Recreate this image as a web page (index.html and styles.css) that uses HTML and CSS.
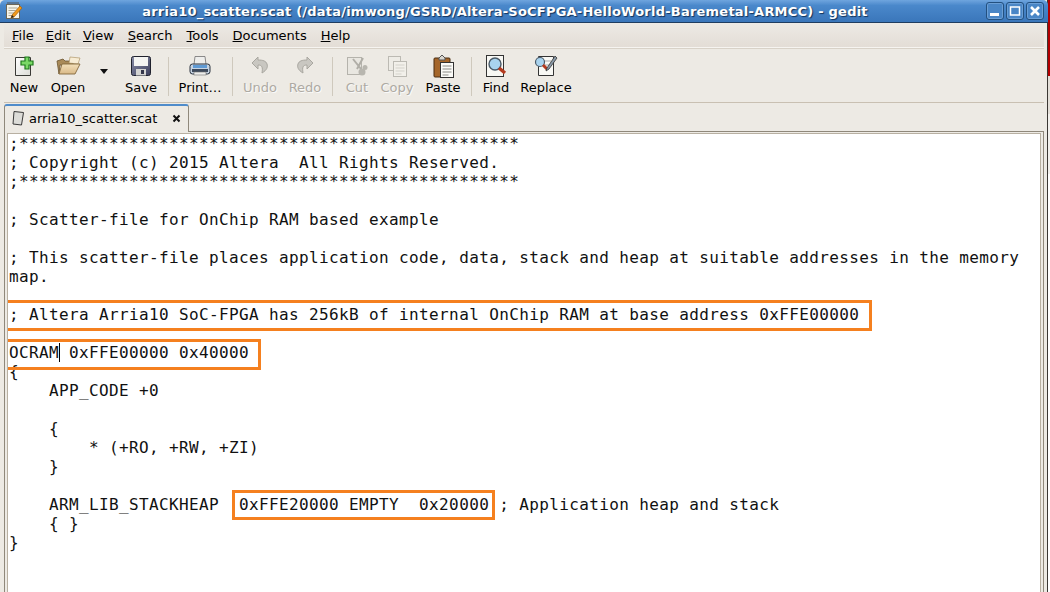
FILE: index.html
```html
<!DOCTYPE html>
<html lang="en">
<head>
<meta charset="utf-8">
<title>gedit</title>
<link rel="stylesheet" href="styles.css">
</head>
<body>
<div class="screen">
  <div class="window">
    <header class="titlebar">
      <svg class="app-icon" width="20" height="20" viewBox="0 0 20 20">
        <rect x="2.500" y="3.500" width="13" height="14" fill="#f6f4ea" stroke="#6b6658"/>
        <path d="M4 3v-2M6 3v-2M8 3v-2M10 3v-2M12 3v-2M14 3v-2" stroke="#555" stroke-width="1"/>
        <path d="M4.500 7h9M4.500 9.500h7M4.500 12h6M4.500 14.500h4" stroke="#a9a595"/>
        <path d="M16 5l2 2-8 9-3 1 1-3z" fill="#f09a1c" stroke="#a85e08" stroke-width=".7"/>
        <path d="M7 17l1-3 2 2z" fill="#222"/>
      </svg>
      <div class="title">arria10_scatter.scat (/data/imwong/GSRD/Altera-SoCFPGA-HelloWorld-Baremetal-ARMCC) - gedit</div>
      <div class="win-buttons">
        <div class="win-btn"><svg width="12" height="12" viewBox="0 0 12 12"><rect x="1" y="8" width="9" height="3" fill="#fff"/></svg></div>
        <div class="win-btn"><svg width="12" height="12" viewBox="0 0 12 12"><rect x="1.500" y="2" width="9" height="8" fill="none" stroke="#fff" stroke-width="1.500"/></svg></div>
        <div class="win-btn"><svg width="12" height="12" viewBox="0 0 12 12"><path d="M2 2l8 8M10 2l-8 8" stroke="#fff" stroke-width="2.600"/></svg></div>
      </div>
    </header>

    <div class="body">
      <nav class="menubar">
        <span class="menu tight"><u>F</u>ile</span>
        <span class="menu tight"><u>E</u>dit</span>
        <span class="menu"><u>V</u>iew</span>
        <span class="menu"><u>S</u>earch</span>
        <span class="menu"><u>T</u>ools</span>
        <span class="menu"><u>D</u>ocuments</span>
        <span class="menu"><u>H</u>elp</span>
      </nav>

      <div class="toolbar">
        <div class="tool w40">
          <svg class="ico" width="24" height="24" viewBox="0 0 24 24">
            <defs>
              <linearGradient id="pg" x1="0" y1="0" x2="1" y2="1"><stop offset="0" stop-color="#ffffff"/><stop offset="1" stop-color="#dcdcd6"/></linearGradient>
            </defs>
            <path d="M3.500 3.500h15v18h-15z" fill="url(#pg)" stroke="#3a3a36"/>
            <path d="M13 3h4v4h4v4h-4v4h-4v-4H9V7h4z" fill="#7ad866" stroke="#1f7a1c" stroke-width="1.200"/>
          </svg>
          <span class="label">New</span>
        </div>
        <div class="tool w48">
          <svg class="ico" width="26" height="24" viewBox="0 0 26 24">
            <defs>
              <linearGradient id="fo" x1="0" y1="0" x2="0" y2="1"><stop offset="0" stop-color="#f3e0ba"/><stop offset="1" stop-color="#d9b987"/></linearGradient>
            </defs>
            <path d="M2 7l6-2 2 2h8v4H5l-1 9z" fill="#a98a58" stroke="#6b5430" stroke-width=".8"/>
            <path d="M15 3l10 1-2 6-9-1z" fill="#f7ecd4" stroke="#a58a58" stroke-width=".6"/>
            <path d="M7 10h18l-5 10H4z" fill="url(#fo)" stroke="#85693c" stroke-width=".9"/>
          </svg>
          <span class="label">Open</span>
        </div>
        <div class="tool w24 arrow-tool"><span class="arrow"></span></div>
        <div class="tool w50">
          <svg class="ico" width="24" height="24" viewBox="0 0 24 24">
            <defs>
              <linearGradient id="fl" x1="0" y1="0" x2="1" y2="1"><stop offset="0" stop-color="#8a8ea8"/><stop offset="1" stop-color="#3c3f5c"/></linearGradient>
            </defs>
            <path d="M2.500 4.500a2 2 0 0 1 2-2h15a2 2 0 0 1 2 2v15a2 2 0 0 1-2 2h-15a2 2 0 0 1-2-2z" fill="url(#fl)" stroke="#20222e"/>
            <rect x="5" y="3" width="14" height="9" fill="#f4f4f2"/>
            <rect x="7" y="15" width="10" height="6.500" fill="#d4d4d2"/>
            <rect x="12" y="16" width="3" height="4" fill="#33364a"/>
          </svg>
          <span class="label">Save</span>
        </div>
        <div class="sep w4"></div>
        <div class="tool w60">
          <svg class="ico" width="24" height="24" viewBox="0 0 24 24">
            <path d="M7 2.500h10l1 8H6z" fill="#eeeeec" stroke="#707070" stroke-width=".8"/>
            <rect x="2" y="10" width="20" height="10" rx="2.500" fill="#c6d3e2" stroke="#28303c"/>
            <rect x="5" y="11" width="14" height="3" fill="#5f9ad4"/>
            <rect x="4" y="15" width="16" height="3" fill="#3e4a5c"/>
            <rect x="6" y="18" width="12" height="3" fill="#eeeeec" stroke="#707070" stroke-width=".6"/>
          </svg>
          <span class="label">Print…</span>
        </div>
        <div class="sep w4"></div>
        <div class="tool w52 off">
          <svg class="ico" width="24" height="24" viewBox="0 0 24 24">
            <path d="M10 3L4 9l6 6v-4c4 0 5 2 4 8 5-3 6-6 5-9-1-3-4-4-9-4z" fill="#c9c7c1" stroke="#a9a7a0"/>
          </svg>
          <span class="label">Undo</span>
        </div>
        <div class="tool w38 off">
          <svg class="ico" width="24" height="24" viewBox="0 0 24 24">
            <path d="M14 3l6 6-6 6v-4c-4 0-5 2-4 8-5-3-6-6-5-9 1-3 4-4 9-4z" fill="#c9c7c1" stroke="#a9a7a0"/>
          </svg>
          <span class="label">Redo</span>
        </div>
        <div class="sep w16"></div>
        <div class="tool w34 off">
          <svg class="ico" width="24" height="24" viewBox="0 0 24 24">
            <rect x="2.500" y="3.500" width="14" height="17" fill="#e9e7e1" stroke="#b5b3ac"/>
            <path d="M8 5l8 10M18 4l-6 11" stroke="#b0aea7" stroke-width="2"/>
            <circle cx="17" cy="18" r="3.500" fill="#b8b6af"/><circle cx="20" cy="13.500" r="2.500" fill="#b8b6af"/>
          </svg>
          <span class="label">Cut</span>
        </div>
        <div class="tool w46 off">
          <svg class="ico" width="24" height="24" viewBox="0 0 24 24">
            <rect x="3.500" y="2.500" width="12" height="14" fill="#eeece6" stroke="#bcbab3"/>
            <rect x="8.500" y="7.500" width="13" height="15" fill="#f2f0ea" stroke="#bcbab3"/>
            <path d="M10.500 11h9M10.500 14h9M10.500 17h9M10.500 20h6" stroke="#d4d2cb"/>
          </svg>
          <span class="label">Copy</span>
        </div>
        <div class="tool w46">
          <svg class="ico" width="24" height="24" viewBox="0 0 24 24">
            <rect x="3" y="4" width="16" height="19" rx="1" fill="#a5662a" stroke="#4a2c10"/>
            <path d="M8 4l3-3 3 3v2H8z" fill="#d8d6cf" stroke="#555"/>
            <rect x="9.500" y="8.500" width="13" height="15" fill="#fbfbf8" stroke="#333"/>
            <path d="M11.500 12h9M11.500 15h9M11.500 18h9M11.500 21h6" stroke="#8a8a86"/>
          </svg>
          <span class="label">Paste</span>
        </div>
        <div class="sep w10"></div>
        <div class="tool w40">
          <svg class="ico" width="24" height="24" viewBox="0 0 24 24">
            <rect x="2.500" y="1.500" width="17" height="21" fill="#f8f8f4" stroke="#333"/>
            <circle cx="11" cy="10" r="6" fill="#a9d3ee" stroke="#4a5a68" stroke-width="1.400"/>
            <path d="M15 14l6 5" stroke="#b43a1e" stroke-width="3.500"/>
          </svg>
          <span class="label">Find</span>
        </div>
        <div class="tool w60">
          <svg class="ico" width="26" height="24" viewBox="0 0 26 24">
            <path d="M5.500 2.500h15v19h-15z" fill="#f8f8f4" stroke="#333"/>
            <path d="M9 7h9M12 11h5M12 15h4" stroke="#aaa"/>
            <circle cx="7" cy="8" r="4.500" fill="#a9d3ee" stroke="#4a5a68" stroke-width="1.200"/>
            <path d="M10 11l4 4" stroke="#b43a1e" stroke-width="3"/>
            <path d="M22 2l2 2-8 11-3 2 1-3z" fill="#8a9aa8" stroke="#333" stroke-width=".8"/>
          </svg>
          <span class="label">Replace</span>
        </div>
      </div>

      <div class="tabstrip">
        <div class="tab">
          <svg width="14" height="16" viewBox="0 0 14 16" class="tab-icon">
            <path d="M3 1.500l9.500 1-2 12.500-8.500-1z" fill="#dcdcd8" stroke="#3a3a3a"/>
          </svg>
          <span class="tab-name">arria10_scatter.scat</span>
          <svg class="tab-close" width="9" height="9" viewBox="0 0 9 9"><path d="M1.500 1.500l6 6M7.500 1.500l-6 6" stroke="#111" stroke-width="2"/></svg>
        </div>
      </div>

      <div class="frame">
        <div class="editor">
<pre class="code">;**************************************************
; Copyright (c) 2015 Altera  All Rights Reserved.
;**************************************************

; Scatter-file for OnChip RAM based example

; This scatter-file places application code, data, stack and heap at suitable addresses in the memory
map.

; Altera Arria10 SoC-FPGA has 256kB of internal OnChip RAM at base address 0xFFE00000

OCRAM<span class="caret"></span> 0xFFE00000 0x40000
{
    APP_CODE +0

    {
        * (+RO, +RW, +ZI)
    }

    ARM_LIB_STACKHEAP  0xFFE20000 EMPTY  0x20000 ; Application heap and stack
    { }
}</pre>
          <div class="mark mark-a"></div>
          <div class="mark mark-b"></div>
          <div class="mark mark-c"></div>
        </div>
      </div>
    </div>
  </div>
  <aside class="strip"><div class="strip-red"></div><div class="strip-a"></div><div class="strip-b"></div></aside>
</div>
</body>
</html>
```

FILE: styles.css
```css
* { box-sizing: border-box; }
html, body { margin: 0; padding: 0; }
body { width: 1050px; height: 592px; overflow: hidden; background: #fff; font-family: "DejaVu Sans", sans-serif; font-size: 13px; color: #000; }
.screen { display: flex; width: 1050px; height: 592px; }
.window { width: 1048px; height: 592px; display: flex; flex-direction: column; background: #edeae4; border-right: 1px solid #3a3733; }
.titlebar { height: 23px; flex: none; display: flex; align-items: center; background: linear-gradient(#6fa5de 0, #4a88cb 25%, #3a76ba 100%); border-bottom: 1px solid #1f3d60; border-radius: 5px 5px 0 0; padding: 0 4px 0 4px; margin-right: -1px; }
.app-icon { flex: none; }
.title { flex: 1; text-align: center; color: #fff; font-weight: 700; font-size: 13px; letter-spacing: .22px; white-space: nowrap; text-shadow: 1px 1px 1px #12325a; padding-right: 0; }
.win-buttons { display: flex; gap: 2px; flex: none; }
.win-btn { width: 18px; height: 18px; border: 1px solid #23507f; border-radius: 3px; background: #4a86c6; display: flex; align-items: center; justify-content: center; box-shadow: inset 0 0 0 1px #6b9fd6; }
.body { flex: 1; display: flex; flex-direction: column; padding: 0 3px 0 4px; min-height: 0; }
.menubar { height: 25px; flex: none; display: flex; align-items: center; gap: 14px; padding-left: 8px; background: linear-gradient(#edeae5, #e3ddd6); border-bottom: 1px solid #f6f4f0; box-shadow: 0 1px 0 #d8d2c8; }
.menu { white-space: nowrap; }
.tight { margin-right: -2px; }
.toolbar { height: 55px; flex: none; display: flex; border-bottom: 1px solid #c9c0b2; }
.tool { display: flex; flex-direction: column; align-items: center; flex: none; padding-top: 6px; }
.ico { display: block; height: 24px; flex: none; }
.label { margin-top: 2px; line-height: 16px; white-space: nowrap; }
.off .label { color: #aeaaa3; text-shadow: 1px 1px 0 #fafafa; }
.w4 { width: 4px; } .w10 { width: 10px; } .w16 { width: 16px; } .w24 { width: 24px; } .w34 { width: 34px; }
.w38 { width: 38px; } .w40 { width: 40px; } .w46 { width: 46px; } .w48 { width: 48px; } .w50 { width: 50px; }
.w52 { width: 52px; } .w60 { width: 60px; }
.sep { flex: none; display: flex; justify-content: center; padding: 9px 0 6px; }
.sep::before { content: ""; width: 1px; background: #cfc9bd; }
.arrow-tool { padding-top: 21px; }
.arrow { width: 0; height: 0; border: 4.500px solid transparent; border-top: 5px solid #111; border-bottom: 0; }
.tabstrip { height: 28px; flex: none; display: flex; align-items: flex-end; }
.tab { width: 185px; height: 28px; display: flex; align-items: center; background: #edeae4; border: 1px solid #8f887b; border-top: 2px solid #4f8ccb; border-bottom: 0; border-radius: 3px 3px 0 0; padding: 0 0 2px 6px; margin-bottom: -1px; position: relative; z-index: 1; }
.tab-icon { flex: none; margin-right: 4px; }
.tab-name { flex: none; }
.tab-close { flex: none; margin-left: 15px; }
.frame { flex: 1; min-height: 0; border: 1px solid #8f887b; border-bottom: 0; padding: 1px 2px 0 2px; background: #edeae4; }
.editor { position: relative; height: 100%; background: #fff; border: 1px solid #b8b0a2; border-bottom: 0; overflow: hidden; }
.code { margin: 0; padding: 0 0 0 1px; font-family: "DejaVu Sans Mono", monospace; font-size: 16px; letter-spacing: .37px; line-height: 19px; color: #111; }
.caret { display: inline-block; width: 0; height: 19px; border-left: 1px solid #000; margin-right: -1px; vertical-align: top; }
.mark { position: absolute; border: 3px solid #f5801f; }
.mark-a { left: -3px; top: 166px; width: 867px; height: 31px; }
.mark-b { left: -5px; top: 205px; width: 258px; height: 31px; }
.mark-c { left: 224px; top: 356px; width: 263px; height: 30px; }
.strip { width: 2px; height: 592px; flex: none; display: flex; flex-direction: column; background: #fff; }
.strip-red { height: 76px; background: #b30000; }
.strip-a { height: 38px; background: #e4dfd8; }
.strip-b { height: 60px; background: #f2f0ec; }
```
